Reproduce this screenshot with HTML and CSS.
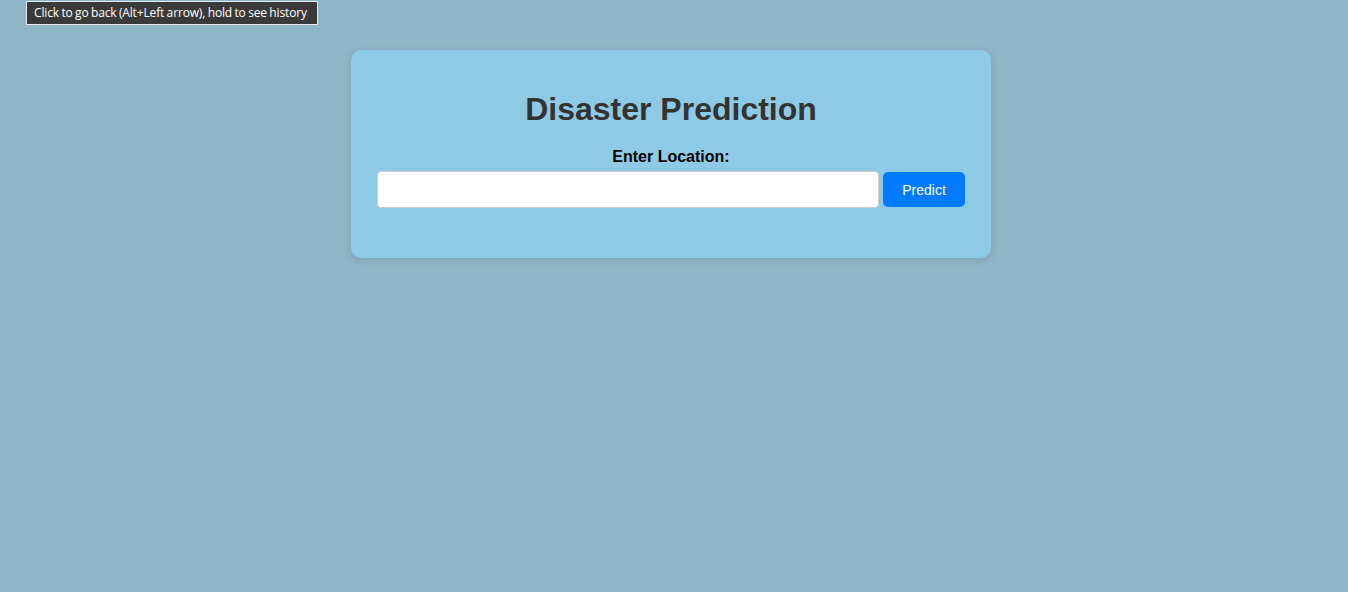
FILE: index.html
```html
<!DOCTYPE html>
<html lang="en">
<head>
<meta charset="utf-8">
<title>Disaster Prediction</title>
<link rel="stylesheet" href="styles.css">
</head>
<body>
<div class="tooltip">Click to go back (Alt+Left arrow), hold to see history</div>
<div class="card">
  <h1 class="title">Disaster Prediction</h1>
  <form class="form">
    <label class="label" for="loc">Enter Location:</label>
    <div class="row">
      <input class="input" id="loc" type="text">
      <button class="btn" type="button">Predict</button>
    </div>
  </form>
</div>
</body>
</html>
```
FILE: styles.css
```css
html, body {
  margin: 0;
  padding: 0;
}
body {
  background: #8fb5c8;
  font-family: "Liberation Sans", Arial, sans-serif;
  min-height: 592px;
  padding-right: 6px;
}
.tooltip {
  position: absolute;
  left: 26px;
  top: 1px;
  height: 24px;
  padding: 0 7px;
  box-sizing: border-box;
  width: 292px;
  background: #3a3a3a;
  border: 1px solid #e8e8e8;
  color: #fff;
  font-family: "Open Sans", "DejaVu Sans", sans-serif;
  font-size: 12px;
  line-height: 22px;
  white-space: nowrap;
  letter-spacing: -0.15px;
  word-spacing: -0.5px;
}
.card {
  width: 640px;
  box-sizing: border-box;
  margin: 50px auto 0;
  background: #8ecae6;
  border-radius: 10px;
  box-shadow: 0 2px 8px rgba(0, 0, 0, 0.12);
  padding: 20px 26px 50px;
}
.title {
  margin: 21px 0 20px;
  text-align: center;
  font-size: 32px;
  line-height: 37px;
  font-weight: bold;
  color: #333;
}
.form {
  display: flex;
  flex-direction: column;
  align-items: stretch;
}
.label {
  text-align: center;
  font-weight: bold;
  font-size: 16px;
  line-height: 18px;
  color: #000;
  margin-bottom: 5px;
}
.row {
  display: flex;
  align-items: center;
  gap: 4px;
}
.input {
  width: 502px;
  height: 37px;
  box-sizing: border-box;
  border: 1px solid #ccc;
  border-radius: 4px;
  background: #fff;
  padding: 0 8px;
  font-size: 14px;
}
.btn {
  width: 82px;
  height: 35px;
  border: none;
  border-radius: 5px;
  background: #007bff;
  color: #fff;
  font-family: "Liberation Sans", Arial, sans-serif;
  font-size: 14px;
  cursor: pointer;
}
```
